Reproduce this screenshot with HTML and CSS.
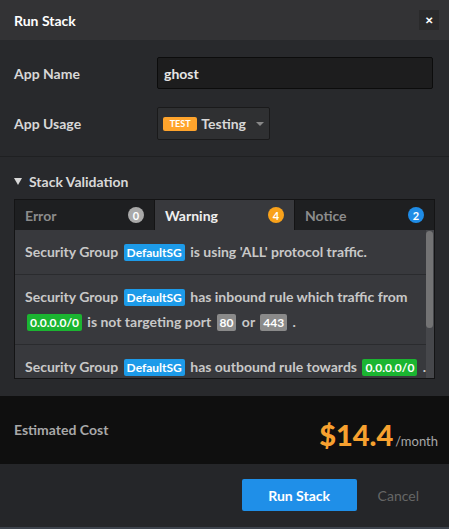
FILE: index.html
```html
<!DOCTYPE html>
<html>
<head>
<meta charset="utf-8">
<link rel="stylesheet" href="styles.css">
</head>
<body>
<div class="modal">
  <div class="header">
    <div class="title">Run Stack</div>
    <div class="close">&#x2715;</div>
  </div>
  <div class="form">
    <div class="row">
      <div class="label">App Name</div>
      <div class="input">ghost</div>
    </div>
    <div class="row">
      <div class="label">App Usage</div>
      <div class="select"><span class="usage-tag">TEST</span><span class="usage-text">Testing</span><span class="caret"></span></div>
    </div>
  </div>
  <div class="validation">
    <div class="section-title"><span class="tri"></span>Stack Validation</div>
    <div class="tabs">
      <div class="tab"><span>Error</span><span class="count gray">0</span></div>
      <div class="tab active"><span>Warning</span><span class="count orange">4</span></div>
      <div class="tab"><span>Notice</span><span class="count blue">2</span></div>
    </div>
    <div class="messages">
      <div class="msg-list">
        <div class="msg">Security Group <span class="tag sg">DefaultSG</span> is using 'ALL' protocol traffic.</div>
        <div class="msg">Security Group <span class="tag sg">DefaultSG</span> has inbound rule which traffic from <span class="tag ip">0.0.0.0/0</span> is not targeting port <span class="tag port">80</span> or <span class="tag port">443</span> .</div>
        <div class="msg nowrap">Security Group <span class="tag sg">DefaultSG</span> has outbound rule towards <span class="tag ip">0.0.0.0/0</span> .</div>
      </div>
      <div class="scrollbar"><div class="thumb"></div></div>
    </div>
  </div>
  <div class="cost">
    <div class="cost-label">Estimated Cost</div>
    <div class="cost-value"><span class="amount">$14.4</span><span class="per">/month</span></div>
  </div>
  <div class="footer">
    <div class="btn-primary">Run Stack</div>
    <div class="btn-cancel">Cancel</div>
  </div>
</div>
</body>
</html>
```
FILE: styles.css
```css
* { box-sizing: border-box; }
html, body { margin: 0; padding: 0; }
body {
  width: 449px;
  height: 529px;
  background: #28292c;
  font-family: Lato, "Open Sans", "Liberation Sans", sans-serif;
  color: #ddd;
  overflow: hidden;
}
.modal {
  display: flex;
  flex-direction: column;
  height: 529px;
  border-bottom: 2px solid #3d434c;
}
.header {
  height: 40px;
  background: #333335;
  display: flex;
  align-items: center;
  justify-content: space-between;
  padding: 0 10px 0 14px;
}
.title {
  font-size: 14px;
  font-weight: 700;
  color: #fff;
}
.close {
  width: 20px;
  height: 20px;
  background: #2a2a2b;
  color: #fff;
  font-size: 10px;
  font-weight: 700;
  display: flex;
  align-items: center;
  justify-content: center;
}
.form {
  padding: 17px 16px 16px 14px;
  display: flex;
  flex-direction: column;
  gap: 18px;
  border-bottom: 1px solid #1f2022;
}
.row {
  display: flex;
  align-items: center;
}
.label {
  width: 143px;
  font-size: 14px;
  font-weight: 700;
  color: #d8d8d8;
}
.input {
  flex: 1;
  height: 32px;
  background: #1d1d1e;
  border: 1px solid #0c0c0c;
  border-radius: 2px;
  padding: 0 6px;
  display: flex;
  align-items: center;
  font-size: 14px;
  font-weight: 700;
  color: #e6e6e6;
}
.select {
  height: 33px;
  width: 113px;
  background: #2f3032;
  border: 1px solid #1a1a1b;
  border-radius: 2px;
  display: flex;
  align-items: center;
  padding: 0 5px;
}
.usage-tag {
  background: #ffa42c;
  color: #fff;
  font-size: 9px;
  font-weight: 700;
  width: 40px;
  height: 14px;
  border-radius: 2px;
  display: flex;
  align-items: center;
  justify-content: center;
  margin-right: 4px;
}
.usage-text {
  font-size: 14px;
  font-weight: 700;
  color: #d8d8d8;
}
.caret {
  margin-left: 10px;
  width: 0;
  height: 0;
  border-left: 4px solid transparent;
  border-right: 4px solid transparent;
  border-top: 4px solid #888;
}
.validation {
  padding: 16px 14px 17px 14px;
}
.section-title {
  display: flex;
  align-items: center;
  font-size: 14px;
  font-weight: 700;
  color: #d8d8d8;
  margin-bottom: 9px;
}
.tri {
  width: 0;
  height: 0;
  border-left: 4px solid transparent;
  border-right: 4px solid transparent;
  border-top: 7px solid #d8d8d8;
  margin-right: 7px;
}
.tabs {
  display: flex;
  background: #1e1f21;
  border: 1px solid #141415;
  border-bottom: none;
}
.tab {
  flex: 1;
  height: 30px;
  display: flex;
  align-items: center;
  justify-content: space-between;
  padding: 0 10px 0 10px;
  font-size: 14px;
  font-weight: 700;
  color: #8c8c8c;
  border-right: 1px solid #141415;
}
.tab:last-child { border-right: none; }
.tab.active {
  background: #38393d;
  color: #f0f0f0;
}
.count {
  width: 16px;
  height: 16px;
  border-radius: 50%;
  color: #fff;
  font-size: 11px;
  font-weight: 700;
  display: flex;
  align-items: center;
  justify-content: center;
}
.count.gray { background: #a9a9a9; }
.count.orange { background: #f9a21b; }
.count.blue { background: #1f8ce6; }
.messages {
  height: 149px;
  overflow: hidden;
  background: #38393d;
  border: 1px solid #141415;
  border-top: none;
  display: flex;
}
.msg-list {
  flex: 1;
  min-width: 0;
}
.scrollbar {
  width: 8px;
  background: #46474b;
  padding: 1px 1px 0 0;
}
.thumb {
  height: 97px;
  background: #737374;
  border-radius: 4px;
}
.msg {
  padding: 10px 0 9px 10px;
  font-size: 14px;
  font-weight: 700;
  color: #c8c8c8;
  line-height: 24px;
  border-bottom: 1px solid #2a2b2e;
}
.msg.nowrap { white-space: nowrap; }
.tag {
  color: #fff;
  font-size: 12px;
  padding: 1px 3px;
  border-radius: 2px;
  margin: 0 2px;
}
.tag.sg { background: #1d9be9; }
.tag.ip { background: #1bb531; }
.tag.port { background: #8a8a8a; }
.cost {
  height: 68px;
  background: #0f0f0f;
  display: flex;
  align-items: center;
  justify-content: space-between;
  padding: 0 11px 0 14px;
}
.cost-label {
  font-size: 14px;
  font-weight: 700;
  color: #a8a8a8;
  padding-bottom: 2px;
}
.cost-value {
  display: flex;
  align-items: baseline;
  padding-top: 8px;
}
.amount {
  font-size: 29px;
  font-weight: 900;
  color: #f7a12f;
}
.per {
  font-size: 13px;
  color: #a8a8a8;
  margin-left: 2px;
}
.footer {
  flex: 1;
  background: #252629;
  display: flex;
  justify-content: flex-end;
  align-items: flex-start;
  padding: 15px 30px 0 0;
  gap: 21px;
}
.btn-primary {
  width: 115px;
  height: 32px;
  background: #1f8fe8;
  border-radius: 2px;
  color: #fff;
  font-size: 14px;
  font-weight: 700;
  display: flex;
  align-items: center;
  justify-content: center;
}
.btn-cancel {
  height: 32px;
  display: flex;
  align-items: center;
  font-size: 14px;
  color: #666;
}
```
